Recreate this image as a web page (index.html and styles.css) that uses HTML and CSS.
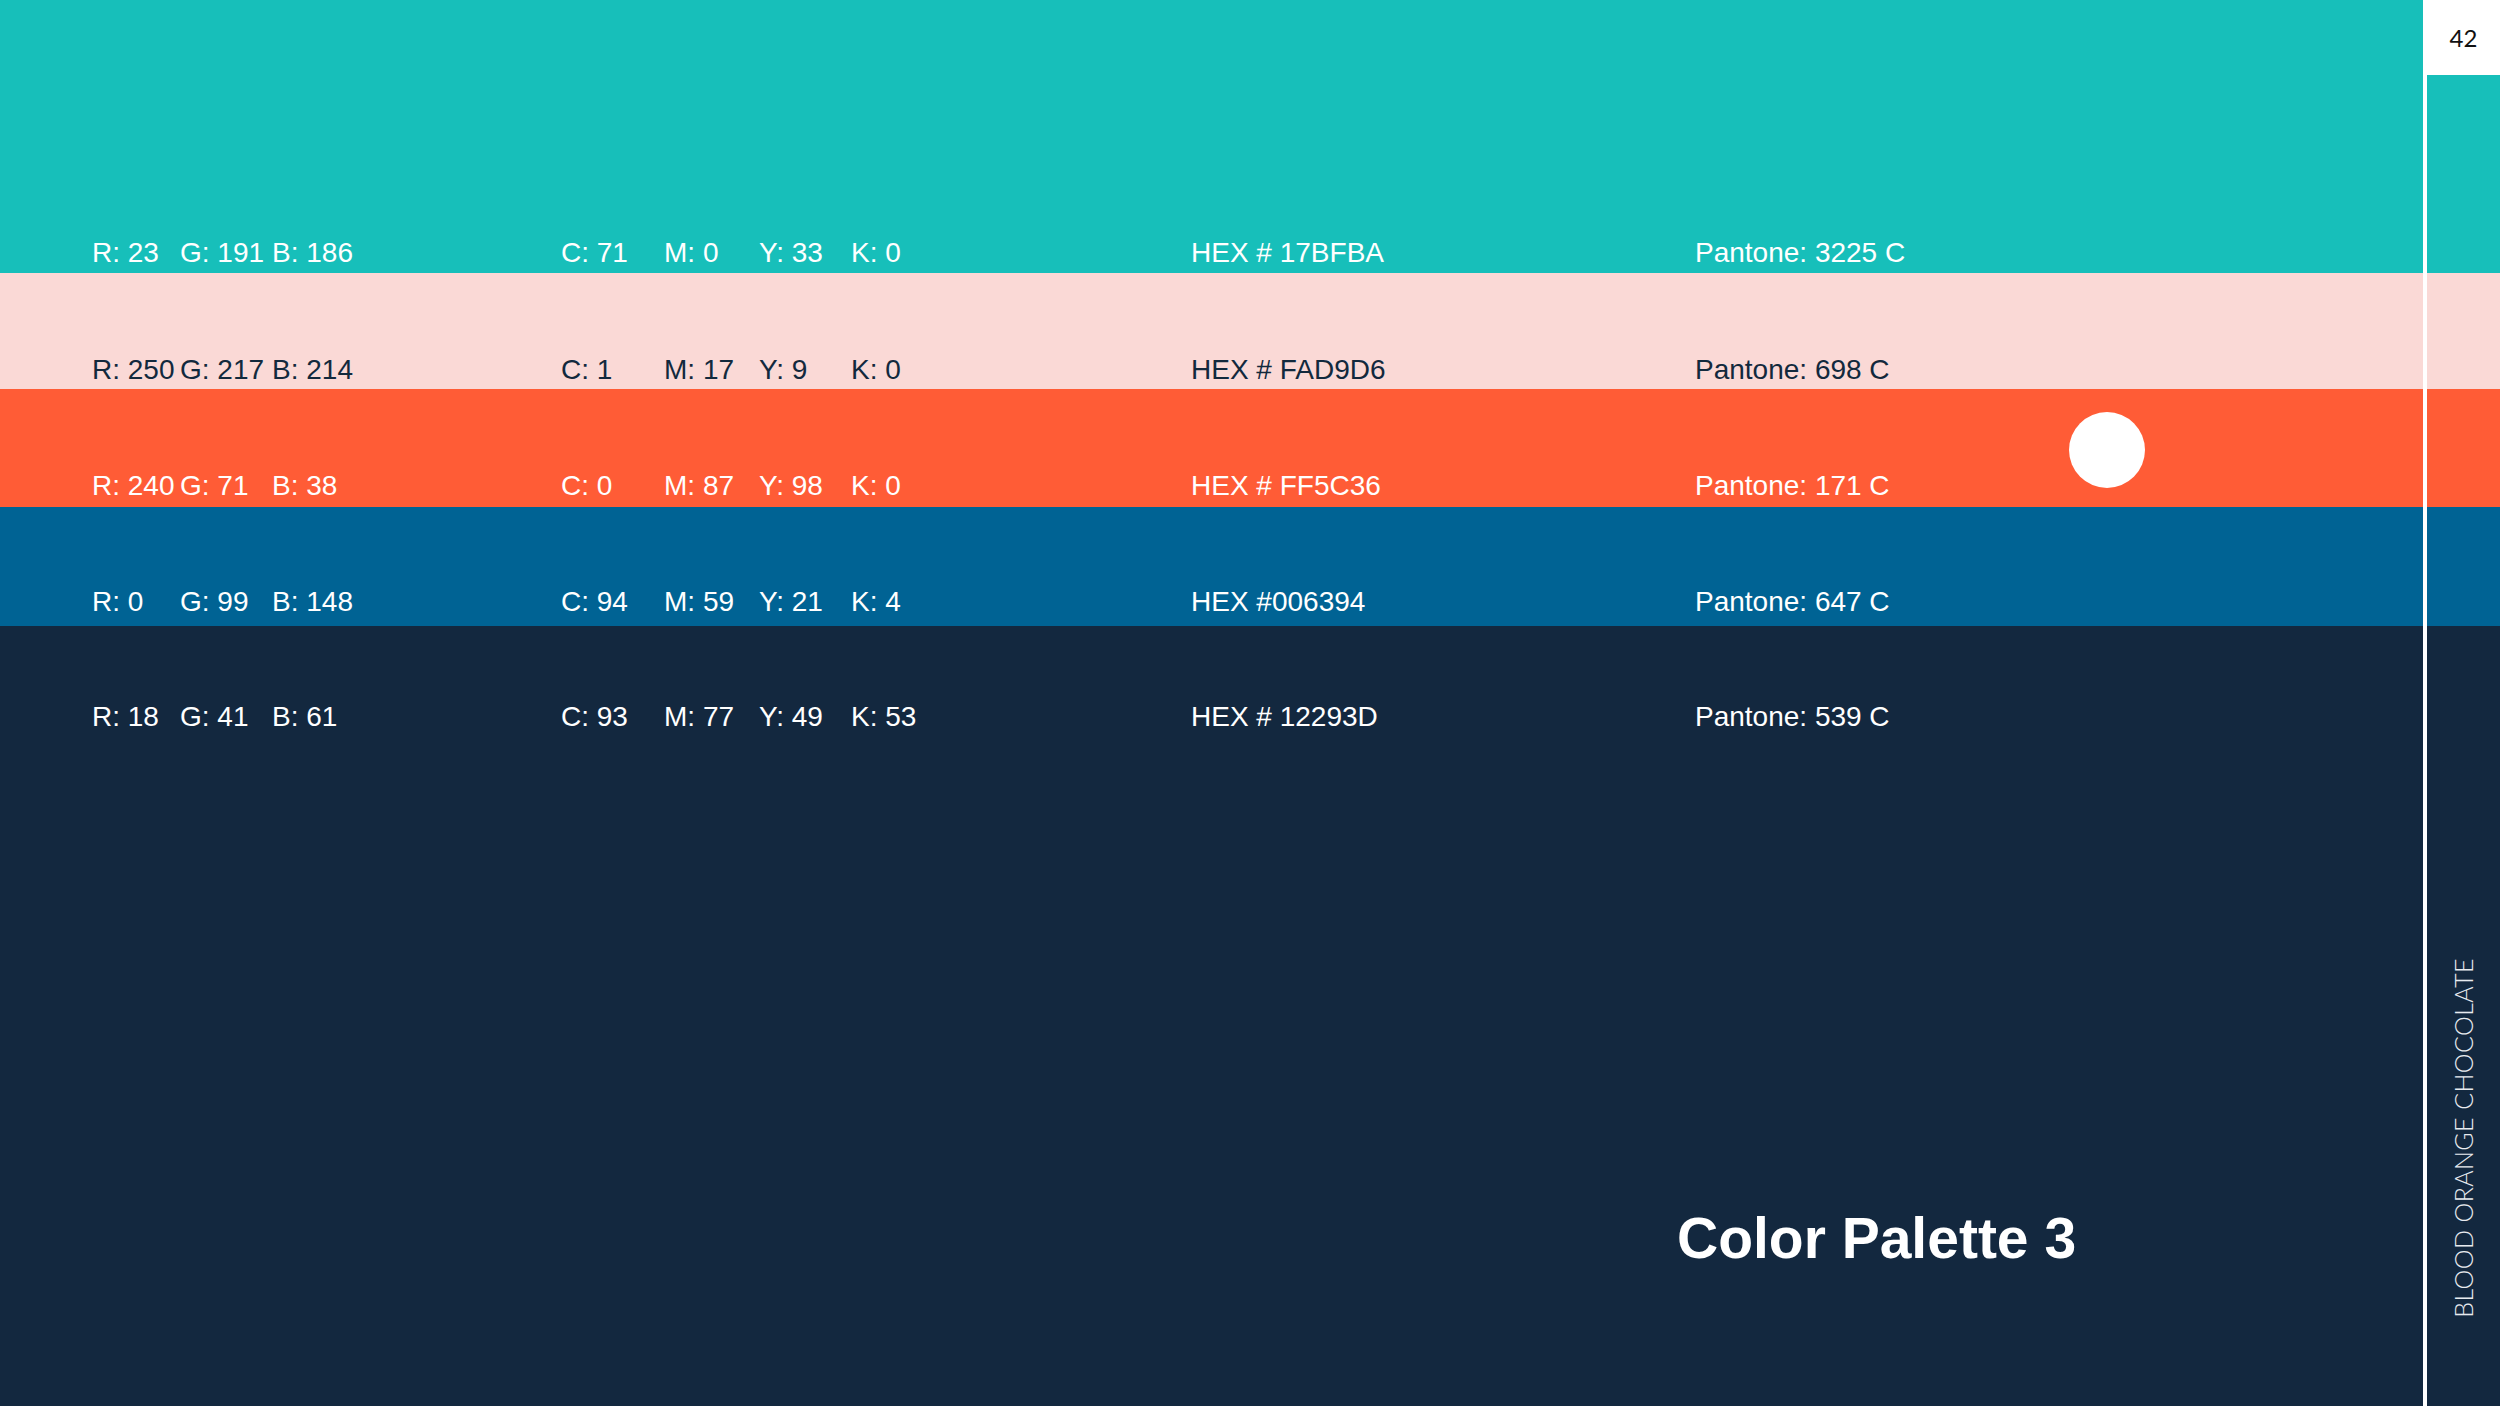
FILE: index.html
```html
<!DOCTYPE html>
<html>
<head>
<meta charset="utf-8">
<link rel="stylesheet" href="styles.css">
</head>
<body>
<div class="page">
  <section class="band teal">
    <div class="row">
      <span>R: 23</span><span>G: 191</span><span>B: 186</span>
      <span>C: 71</span><span>M: 0</span><span>Y: 33</span><span>K: 0</span>
      <span>HEX # 17BFBA</span><span>Pantone: 3225 C</span>
    </div>
  </section>
  <section class="band pink">
    <div class="row">
      <span>R: 250</span><span>G: 217</span><span>B: 214</span>
      <span>C: 1</span><span>M: 17</span><span>Y: 9</span><span>K: 0</span>
      <span>HEX # FAD9D6</span><span>Pantone: 698 C</span>
    </div>
  </section>
  <section class="band orange">
    <div class="row">
      <span>R: 240</span><span>G: 71</span><span>B: 38</span>
      <span>C: 0</span><span>M: 87</span><span>Y: 98</span><span>K: 0</span>
      <span>HEX # FF5C36</span><span>Pantone: 171 C</span>
    </div>
    <div class="dot"></div>
  </section>
  <section class="band blue">
    <div class="row">
      <span>R: 0</span><span>G: 99</span><span>B: 148</span>
      <span>C: 94</span><span>M: 59</span><span>Y: 21</span><span>K: 4</span>
      <span>HEX #006394</span><span>Pantone: 647 C</span>
    </div>
  </section>
  <section class="band navy">
    <div class="row">
      <span>R: 18</span><span>G: 41</span><span>B: 61</span>
      <span>C: 93</span><span>M: 77</span><span>Y: 49</span><span>K: 53</span>
      <span>HEX # 12293D</span><span>Pantone: 539 C</span>
    </div>
    <h1 class="title">Color Palette 3</h1>
  </section>

  <aside class="side">
    <div class="pagenum">42</div>
    <div class="sidetext">BLOOD ORANGE CHOCOLATE</div>
  </aside>
</div>
</body>
</html>
```

FILE: styles.css
```css
html, body {
  margin: 0;
  padding: 0;
}
body {
  width: 2500px;
  height: 1406px;
  overflow: hidden;
  font-family: "Liberation Sans", Arial, sans-serif;
}
.page {
  position: relative;
  width: 2500px;
  height: 1406px;
  display: flex;
  flex-direction: column;
}
.band {
  position: relative;
  display: flex;
  flex-direction: column;
  justify-content: flex-end;
  color: #ffffff;
}
.row {
  display: grid;
  grid-template-columns: 88px 92px 289px 103px 95px 92px 340px 504px auto;
  padding-left: 92px;
  font-size: 28px;
  line-height: 28px;
  white-space: nowrap;
}
.teal {
  background: #17bfba;
  height: 273px;
}
.teal .row { padding-bottom: 6px; }
.pink {
  background: #fad9d6;
  height: 116px;
  color: #12293d;
}
.pink .row { padding-bottom: 5px; }
.orange {
  background: #ff5c36;
  height: 118px;
}
.orange .row { padding-bottom: 7px; }
.blue {
  background: #006394;
  height: 119px;
}
.blue .row { padding-bottom: 10px; }
.navy {
  background: #13283f;
  flex: 1;
  justify-content: flex-start;
}
.navy .row { padding-top: 77px; }
.dot {
  position: absolute;
  left: 2069px;
  top: 23px;
  width: 76px;
  height: 76px;
  border-radius: 50%;
  background: #ffffff;
}
.title {
  margin: 479px 0 0 0;
  padding-left: 1677px;
  font-size: 57px;
  line-height: 57px;
  font-weight: 700;
  color: #ffffff;
}
.side {
  position: absolute;
  left: 2423px;
  top: 0;
  width: 73px;
  height: 1406px;
  border-left: 4px solid #ffffff;
  display: flex;
  flex-direction: column;
  align-items: center;
}
.pagenum {
  align-self: stretch;
  margin-left: -4px;
  height: 75px;
  background: #ffffff;
  color: #111111;
  font-family: Lato, "Open Sans", sans-serif;
  font-size: 24px;
  display: flex;
  align-items: center;
  justify-content: center;
  padding-left: 4px;
}
.sidetext {
  margin-top: auto;
  margin-bottom: 88px;
  writing-mode: vertical-rl;
  transform: rotate(180deg);
  font-family: Lato, "Open Sans", sans-serif;
  font-weight: 300;
  font-size: 25px;
  letter-spacing: 0.4px;
  color: #e8ebef;
  line-height: 1;
}
```
